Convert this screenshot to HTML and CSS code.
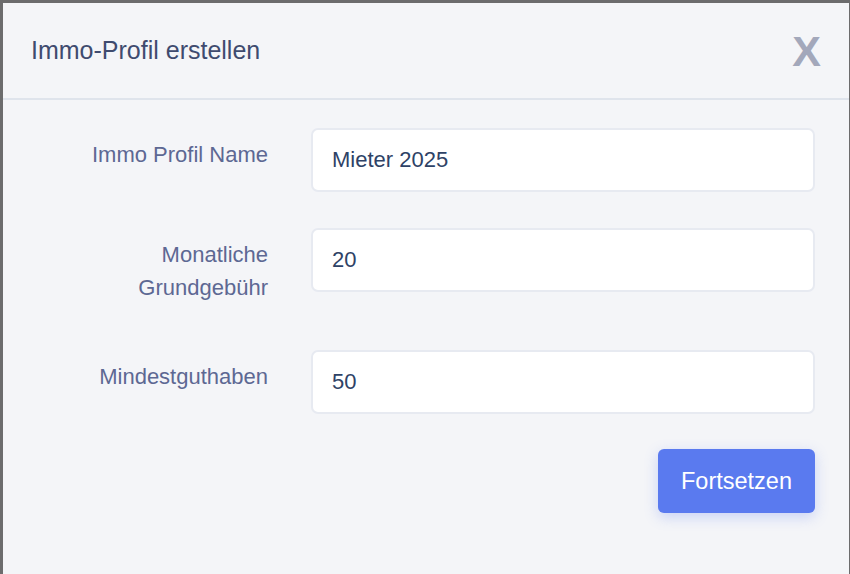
FILE: index.html
```html
<!DOCTYPE html>
<html lang="de">
<head>
<meta charset="utf-8">
<title>Immo-Profil erstellen</title>
<link rel="stylesheet" href="styles.css">
</head>
<body>
<div class="modal">
  <header class="modal-header">
    <h1 class="modal-title">Immo-Profil erstellen</h1>
    <button class="close" type="button">X</button>
  </header>
  <form class="modal-body">
    <div class="form-grid">
      <label class="label" for="name">Immo Profil Name</label>
      <input class="field" id="name" type="text" value="Mieter 2025">
      <label class="label" for="fee">Monatliche<br>Grundgebühr</label>
      <input class="field" id="fee" type="text" value="20">
      <label class="label" for="min">Mindestguthaben</label>
      <input class="field" id="min" type="text" value="50">
    </div>
    <div class="actions">
      <button class="btn-primary" type="button">Fortsetzen</button>
    </div>
  </form>
</div>
</body>
</html>
```

FILE: styles.css
```css
* { box-sizing: border-box; }
html, body {
  margin: 0;
  height: 100%;
  overflow: hidden;
}
body {
  background: #6c6c6d;
  font-family: "Liberation Sans", Arial, Helvetica, sans-serif;
  padding: 3px 1px 0 3px;
}
.modal {
  background: #f4f5f8;
  height: 100%;
}
.modal-header {
  height: 97px;
  border-bottom: 2px solid #dfe4ec;
  display: flex;
  align-items: center;
  justify-content: space-between;
  padding: 0 28px 0 28px;
}
.modal-title {
  margin: 0;
  font-weight: normal;
  font-size: 25px;
  color: #3f4b6f;
  letter-spacing: 0;
}
.close {
  border: 0;
  background: none;
  padding: 0;
  font-family: "Liberation Sans", Arial, sans-serif;
  font-weight: bold;
  font-size: 43px;
  line-height: 1;
  color: #a3a8bb;
  margin-top: 2px;
  cursor: pointer;
}
.modal-body {
  margin: 0;
  padding: 28px 34px 0 28px;
}
.form-grid {
  display: grid;
  grid-template-columns: 237px 1fr;
  column-gap: 43px;
  row-gap: 36px;
  align-items: start;
}
.label {
  text-align: right;
  font-size: 22px;
  line-height: 33px;
  padding: 10px 0;
  color: #5d6893;
}
.field {
  height: 64px;
  width: 100%;
  border: 2px solid #e7eaf1;
  border-radius: 7px;
  background: #ffffff;
  font-family: "Liberation Sans", Arial, sans-serif;
  font-size: 22px;
  color: #2e4266;
  padding: 0 19px;
  outline: none;
}
.actions {
  display: flex;
  justify-content: flex-end;
  margin-top: 35px;
}
.btn-primary {
  height: 64px;
  width: 157px;
  border: 0;
  border-radius: 6px;
  background: #5a7aef;
  color: #ffffff;
  font-family: "Liberation Sans", Arial, sans-serif;
  font-size: 23.5px;
  box-shadow: 0 4px 14px rgba(90, 122, 239, 0.28);
  cursor: pointer;
}
```
